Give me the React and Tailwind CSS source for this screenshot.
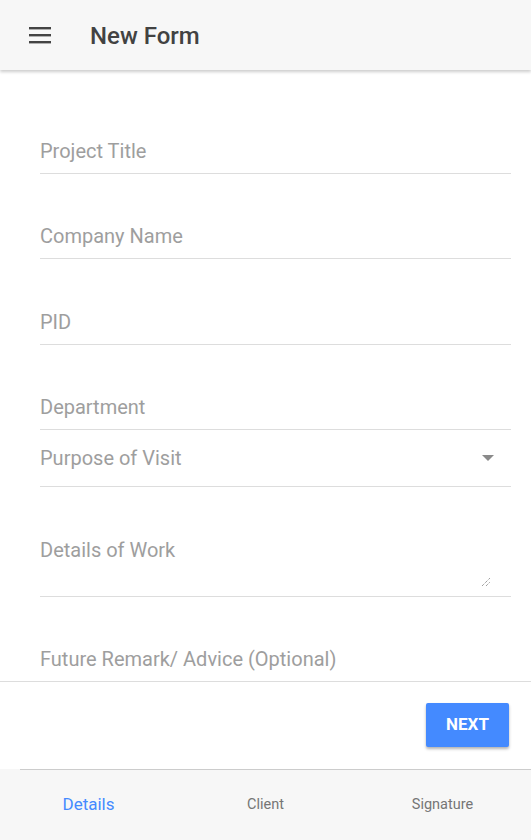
import React from "react";

const font = { fontFamily: "Roboto, 'Liberation Sans', sans-serif" };

function Field({ label, pt }) {
  return (
    <div className={`${pt} pb-[10px] border-b border-[#dddddd]`}>
      <div className="text-[20px] leading-[24px] text-[#9e9e9e]">{label}</div>
    </div>
  );
}

export default function App() {
  return (
    <div className="w-[531px] h-[840px] flex flex-col bg-white overflow-hidden" style={font}>
      <header className="h-[70px] shrink-0 bg-[#f7f7f7] flex items-center shadow-[0_2px_3px_rgba(0,0,0,0.2)] relative z-10">
        <div className="w-[90px] pl-[29px] flex items-center">
          <svg width="22" height="17" viewBox="0 0 22 17">
            <rect x="0" y="0" width="22" height="2.4" fill="#444" />
            <rect x="0" y="7" width="22" height="2.4" fill="#444" />
            <rect x="0" y="14" width="22" height="2.4" fill="#444" />
          </svg>
        </div>
        <h1 className="text-[24px] font-medium text-[#424242] leading-none pt-[2px]">New Form</h1>
      </header>

      <main className="flex-1 overflow-hidden px-[40px] pr-[20px] pt-[19px]">
        <Field label="Project Title" pt="pt-[50px]" />
        <Field label="Company Name" pt="pt-[50px]" />
        <Field label="PID" pt="pt-[51px]" />
        <Field label="Department" pt="pt-[50px]" />
        <div className="pt-[16px] pb-[16px] border-b border-[#dddddd] flex items-center justify-between">
          <div className="text-[20px] leading-[24px] text-[#9e9e9e]">Purpose of Visit</div>
          <svg width="12" height="6" viewBox="0 0 12 6" className="mr-[17px]">
            <polygon points="0,0 12,0 6,6" fill="#8a8a8a" />
          </svg>
        </div>
        <div className="pt-[51px] border-b border-[#dddddd]">
          <div className="text-[20px] leading-[24px] text-[#9e9e9e]">Details of Work</div>
          <div className="h-[34px] flex justify-end items-start pt-[15px] pr-[20px]">
            <svg width="10" height="10" viewBox="0 0 10 10">
              <line x1="1" y1="9" x2="9" y2="1" stroke="#777" strokeWidth="1" strokeDasharray="1 1" />
              <line x1="5" y1="9" x2="9" y2="5" stroke="#777" strokeWidth="1" strokeDasharray="1 1" />
            </svg>
          </div>
        </div>
        <div className="pt-[50px]">
          <div className="text-[20px] leading-[24px] text-[#9e9e9e]">Future Remark/ Advice (Optional)</div>
        </div>
      </main>

      <div className="shrink-0 border-t border-[#dddddd] bg-white h-[88px] flex justify-end items-start pt-[21px] pr-[22px]">
        <button className="w-[83px] h-[44px] rounded-[2px] bg-[#448aff] text-white text-[17px] font-bold shadow-[0_2px_3px_rgba(0,0,0,0.3)]">
          NEXT
        </button>
      </div>

      <nav className="shrink-0 h-[71px] bg-[#f7f7f7] flex flex-col">
        <div className="ml-[20px] h-px bg-[#cccccc]" />
        <div className="flex-1 grid grid-cols-3 items-center">
          <div className="text-center text-[17px] text-[#448aff]">Details</div>
          <div className="text-center text-[14.5px] text-[#757575]">Client</div>
          <div className="text-center text-[14.5px] text-[#757575]">Signature</div>
        </div>
      </nav>
    </div>
  );
}
